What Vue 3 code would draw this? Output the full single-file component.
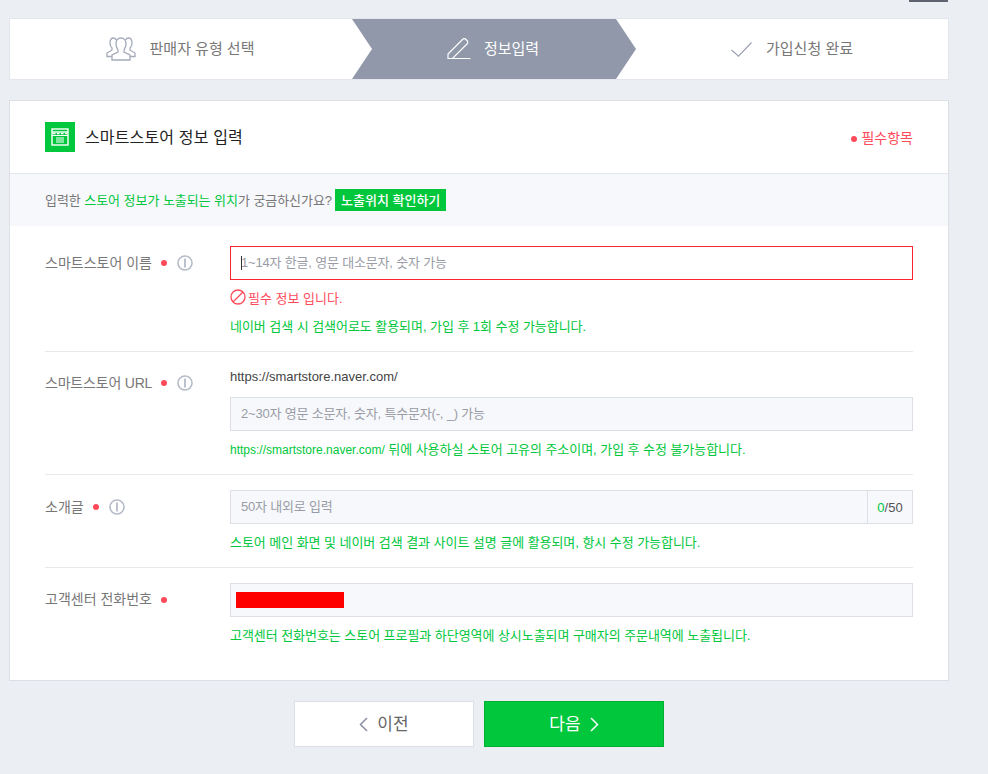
<template>
  <div class="page">
    <div class="top-bar"><span class="top-link"></span></div>

    <ol class="steps">
      <li class="step step-first">
        <svg class="step-icon" width="30" height="24" viewBox="0 0 30 24" fill="none" stroke="#a5abb9" stroke-width="1.3">
          <path d="M15 1C11.5 1 10 4 10 7c0 3 1.5 5 2 6v2l-6 3v5h18v-5l-6-3v-2c.5-1 2-3 2-6 0-3-1.500-6-5-6z" />
          <path d="M10.500 3C9.500 1.500 8.500 1 7.500 1 5 1 4 3.500 4 6c0 2 1 4 2 5v2l-5 3v3.500h5" />
          <path d="M19.500 3c1-1.500 2-2 3-2 2.500 0 3.500 2.500 3.500 5 0 2-1 4-2 5v2l5 3v3.500h-5" />
        </svg>
        <span>판매자 유형 선택</span>
      </li>
      <li class="step step-active">
        <svg class="step-icon" width="24" height="22" viewBox="0 0 24 22" fill="none" stroke="#fff" stroke-width="1.200">
          <path d="M1 20.500v-4.500L15.500 1.500c1-1 2.500-1 3.500 0l1 1c1 1 1 2.500 0 3.500L5.500 20.500z" />
          <path d="M1 20.500h22.500" />
        </svg>
        <span>정보입력</span>
      </li>
      <li class="step step-last">
        <svg class="step-icon" width="21" height="15" viewBox="0 0 21 15" fill="none" stroke="#9aa0b0" stroke-width="1.100">
          <path d="M.5 8l7 6.200L20.500.5" />
        </svg>
        <span>가입신청 완료</span>
      </li>
    </ol>

    <section class="panel">
      <header class="panel-head">
        <span class="store-icon">
          <svg width="18" height="18" viewBox="0 0 18 18" fill="none" stroke="#fff">
            <rect x="1" y="1" width="16" height="16" stroke-width="1.400" />
            <path d="M1 4h16" stroke-width="1.400" />
            <path d="M2 5.500h14" stroke-width="1.500" stroke-dasharray="2.500 1.500" />
            <path d="M1 7.500h16M5 10h8M5 12h8M5 14h8" stroke-width="1" />
          </svg>
        </span>
        <h2>스마트스토어 정보 입력</h2>
        <span class="required-note"><i class="dot"></i>필수항목</span>
      </header>

      <div class="notice">
        <span>입력한 <em>스토어 정보가 노출되는 위치</em>가 궁금하신가요?</span>
        <button class="notice-btn">노출위치 확인하기</button>
      </div>

      <div v-for="field in fields" :key="field.id" class="row" :class="'row-' + field.id">
        <div class="label">
          <span>{{ field.label }}</span>
          <i class="dot"></i>
          <svg v-if="field.info" class="info" width="16" height="16" viewBox="0 0 16 16" fill="none" stroke="#b5bbc8">
            <circle cx="8" cy="8" r="7" stroke-width="1.600" />
            <path d="M8 3.500v9" stroke-width="1.800" />
          </svg>
        </div>
        <div class="control">
          <p v-if="field.prefix" class="prefix">{{ field.prefix }}</p>
          <div class="input-wrap" :class="{ 'has-error': field.error }">
            <input type="text" :placeholder="field.placeholder" />
            <span v-if="field.counter" class="counter"><b>0</b>/50</span>
            <span v-if="field.error" class="caret"></span>
            <span v-if="field.masked" class="masked"></span>
          </div>
          <p v-if="field.error" class="error">
            <svg width="16" height="16" viewBox="0 0 16 16" fill="none" stroke="#ff4a5a" stroke-width="1.300">
              <circle cx="8" cy="8" r="7" />
              <path d="M3 13L13 3" />
            </svg>
            <span>{{ field.error }}</span>
          </p>
          <p class="help"><span v-if="field.helpUrl" class="help-url">{{ field.helpUrl }}</span>{{ field.help }}</p>
        </div>
      </div>
    </section>

    <div class="actions">
      <button class="btn btn-prev">
        <svg width="9" height="15" viewBox="0 0 9 15" fill="none" stroke="#8a90a0" stroke-width="1.500">
          <path d="M8 1L1.500 7.500 8 14" />
        </svg>
        <span>이전</span>
      </button>
      <button class="btn btn-next">
        <span>다음</span>
        <svg width="9" height="15" viewBox="0 0 9 15" fill="none" stroke="#fff" stroke-width="1.500">
          <path d="M1 1l6.500 6.500L1 14" />
        </svg>
      </button>
    </div>
  </div>
</template>

<script setup>
const fields = [
  {
    id: 'name',
    label: '스마트스토어 이름',
    info: true,
    placeholder: '1~14자 한글, 영문 대소문자, 숫자 가능',
    error: '필수 정보 입니다.',
    help: '네이버 검색 시 검색어로도 활용되며, 가입 후 1회 수정 가능합니다.'
  },
  {
    id: 'url',
    label: '스마트스토어 URL',
    info: true,
    prefix: 'https://smartstore.naver.com/',
    placeholder: '2~30자 영문 소문자, 숫자, 특수문자(-, _) 가능',
    helpUrl: 'https://smartstore.naver.com/',
    help: ' 뒤에 사용하실 스토어 고유의 주소이며, 가입 후 수정 불가능합니다.'
  },
  {
    id: 'intro',
    label: '소개글',
    info: true,
    placeholder: '50자 내외로 입력',
    counter: true,
    help: '스토어 메인 화면 및 네이버 검색 결과 사이트 설명 글에 활용되며, 항시 수정 가능합니다.'
  },
  {
    id: 'phone',
    label: '고객센터 전화번호',
    masked: true,
    placeholder: '',
    help: '고객센터 전화번호는 스토어 프로필과 하단영역에 상시노출되며 구매자의 주문내역에 노출됩니다.'
  }
]
</script>

<style>
html,
body {
  margin: 0;
  background: #ebeef3;
}
</style>

<style scoped>
.page {
  width: 940px;
  margin-left: 9px;
  font-family: "Liberation Sans", "Noto Sans CJK KR", sans-serif;
  font-size: 13px;
  color: #777;
}

.top-bar {
  display: flex;
  justify-content: flex-end;
  height: 18px;
}

.top-link {
  width: 39px;
  height: 2px;
  margin-right: 1px;
  background: #5f6470;
}

.steps {
  display: flex;
  height: 60px;
  margin: 0;
  padding: 0;
  list-style: none;
  background: #fff;
  border: 1px solid #e3e6ec;
}

.step {
  display: flex;
  align-items: center;
  justify-content: center;
  gap: 14px;
  font-size: 15px;
  color: #777;
}

.step span {
  margin-top: -3px;
}

.step-first {
  width: 340px;
}

.step-active {
  width: 286px;
  gap: 13px;
  color: #fff;
  background: #9098aa;
  clip-path: polygon(2px 0, 266px 0, 100% 50%, 266px 100%, 2px 100%, 22px 50%);
}

.step-last {
  width: 312px;
}

.panel {
  margin-top: 20px;
  background: #fff;
  border: 1px solid #dcdfe6;
}

.panel-head {
  display: flex;
  align-items: center;
  height: 72px;
  padding: 0 35px;
  border-bottom: 1px solid #e3e6ec;
}

.store-icon {
  display: flex;
  align-items: center;
  justify-content: center;
  width: 30px;
  height: 30px;
  margin-right: 10px;
  background: #00c73c;
}

.panel-head h2 {
  margin: 0 0 2px;
  font-size: 16px;
  font-weight: 400;
  letter-spacing: 0.15px;
  color: #222;
}

.required-note {
  display: flex;
  align-items: center;
  gap: 4px;
  margin-left: auto;
  font-size: 14px;
  color: #ff4a5a;
}

.required-note .dot {
  margin-top: 4px;
}

.dot {
  display: inline-block;
  flex: none;
  width: 6px;
  height: 6px;
  border-radius: 50%;
  background: #ff4a5a;
}

.notice {
  display: flex;
  align-items: center;
  gap: 3px;
  height: 52px;
  padding: 0 35px;
  background: #f7f8fc;
}

.notice span {
  margin-top: -2px;
  letter-spacing: -0.05px;
}

.notice em {
  font-style: normal;
  color: #00c73c;
}

.notice-btn {
  height: 22px;
  padding: 0 6px 2px;
  border: 0;
  background: #00c73c;
  color: #fff;
  font: inherit;
  font-weight: 500;
}

.row {
  display: grid;
  grid-template-columns: 185px 1fr;
  margin: 0 35px;
  padding: 15px 0 15px;
  border-bottom: 1px solid #e8e9ed;
}

.row-name {
  padding-top: 20px;
}

.row-phone {
  padding-bottom: 35px;
  border-bottom: 0;
}

.label {
  display: flex;
  align-items: center;
  align-self: start;
  gap: 9px;
  height: 34px;
  font-size: 14px;
  color: #777;
}

.label span {
  margin-top: -2px;
}

.row-url .label {
  margin-top: -1px;
}

.row-url .label span {
  letter-spacing: -0.2px;
}

.row-phone .label span {
  margin-top: -4px;
}

.info {
  margin-left: 1px;
}

.prefix {
  margin: 1px 0 11px;
  line-height: 18px;
  color: #444;
}

.input-wrap {
  position: relative;
  display: flex;
  height: 34px;
  box-sizing: border-box;
  background: #f7f8fc;
  border: 1px solid #dcdfe6;
}

.input-wrap.has-error {
  background: #fff;
  border-color: #ff2233;
}

.input-wrap input {
  flex: 1;
  min-width: 0;
  padding: 0 10px 2px;
  border: 0;
  outline: 0;
  background: transparent;
  font: inherit;
  letter-spacing: -0.18px;
}

.input-wrap input::placeholder {
  color: #999ca5;
  opacity: 1;
}

.counter {
  display: flex;
  align-items: center;
  justify-content: center;
  box-sizing: border-box;
  width: 45px;
  border-left: 1px solid #dcdfe6;
  color: #555;
}

.counter b {
  font-weight: 400;
  color: #00c73c;
}

.caret {
  position: absolute;
  left: 10px;
  top: 9px;
  width: 1px;
  height: 14px;
  background: #333;
}

.masked {
  position: absolute;
  left: 5px;
  top: 8px;
  width: 108px;
  height: 16px;
  background: #f00;
}

.error {
  display: flex;
  align-items: center;
  gap: 2px;
  height: 18px;
  margin: 8px 0 0;
  color: #ff4a5a;
}

.help {
  margin: 10px 0 0;
  line-height: 18px;
  letter-spacing: -0.05px;
  color: #00c73c;
}

.help-url {
  font-size: 12px;
  letter-spacing: 0;
}

.error + .help {
  margin-top: 12px;
}

.actions {
  display: flex;
  justify-content: center;
  gap: 10px;
  margin-top: 20px;
}

.btn {
  display: flex;
  align-items: center;
  justify-content: center;
  gap: 9px;
  width: 180px;
  height: 46px;
  box-sizing: border-box;
  font-family: inherit;
  font-size: 17px;
}

.btn span {
  margin-top: -4px;
}

.btn svg {
  margin-top: 1px;
}

.btn-prev {
  background: #fff;
  border: 1px solid #dcdfe6;
  color: #666;
}

.btn-next {
  background: #00c73c;
  border: 1px solid #00b034;
  color: #fff;
}
</style>
